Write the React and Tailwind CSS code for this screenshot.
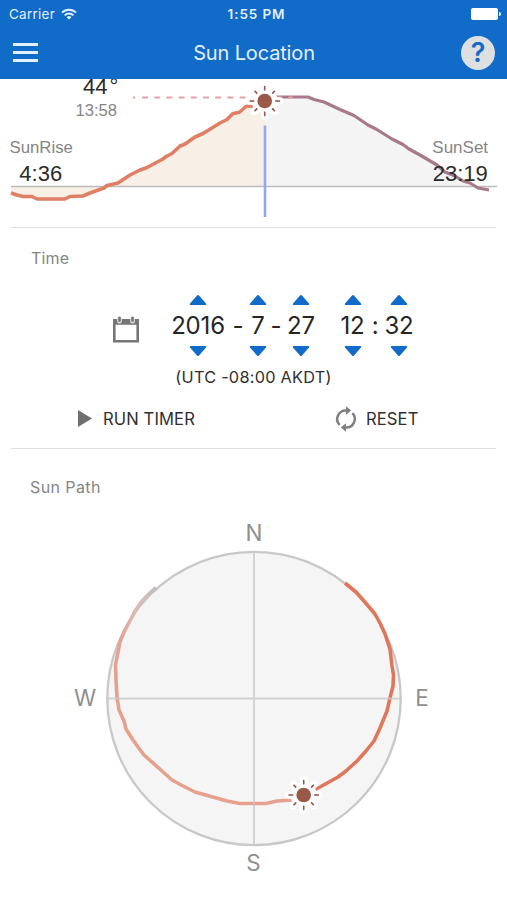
const sunRays = [0, 45, 90, 135, 180, 225, 270, 315];

function Sun({ x, y }) {
  return (
    <g transform={`translate(${x} ${y})`}>
      <circle r="13" fill="#fff" />
      {sunRays.map((a) => (
        <line key={a} x1="10" x2="15" y1="0" y2="0" transform={`rotate(${a})`} stroke="#fff" strokeWidth="7.5" strokeLinecap="round" />
      ))}
      {sunRays.map((a) => (
        <line key={a} x1="10.5" x2={a % 90 ? 14.3 : 15.2} y1="0" y2="0" transform={`rotate(${a})`} stroke="#9c5450" strokeWidth="1.6" />
      ))}
      <circle r="7.3" fill="#9b594a" />
    </g>
  );
}

function StatusBar() {
  return (
    <div className="flex h-7 items-center justify-between pl-[9px] pr-[6px] text-[#e3effb]">
      <div className="flex w-28 items-center gap-[6px]">
        <span className="text-[13.5px] tracking-[0.25px]">Carrier</span>
        <svg width="16" height="12" viewBox="0 0 16 12" fill="none" stroke="#e3effb" strokeWidth="2">
          <path d="M1 4.6a10 10 0 0 1 14 0" />
          <path d="M3.6 7.4a6.2 6.2 0 0 1 8.8 0" />
          <path d="M5.6 9.2a3.4 3.4 0 0 1 4.8 0L8 11.6z" fill="#e3effb" stroke="none" />
        </svg>
      </div>
      <span className="pl-[3px] text-[13.5px] font-semibold tracking-[0.9px]">1:55 PM</span>
      <div className="flex w-28 items-center justify-end gap-px">
        <div className="h-3 w-[27px] rounded-[2px] bg-white" />
        <div className="h-1 w-[2px] rounded-r-full bg-white" />
      </div>
    </div>
  );
}

function Header() {
  return (
    <header className="h-[79px] bg-[#116bc9] text-white">
      <StatusBar />
      <div className="flex h-[49px] items-center justify-between pl-[13px] pr-3">
        <div className="flex w-[34px] flex-col gap-[5px]">
          <div className="h-[3px] w-[25px] bg-[#e3effb]" />
          <div className="h-[3px] w-[25px] bg-[#e3effb]" />
          <div className="h-[3px] w-[25px] bg-[#e3effb]" />
        </div>
        <h1 className="text-[20px] tracking-[-0.15px] text-[#e3effb]">Sun Location</h1>
        <div className="flex size-[34px] items-center justify-center rounded-full bg-[#dedfe1] text-[27px] font-semibold leading-none text-[#116bc9]">?</div>
      </div>
    </header>
  );
}

const rise = '11,193 16,194.8 23,196.5 32,196.5 37,199 65,199 70,196.5 83,196 90,193 104,188 107,185.5 118,183 130,175 140,170 146,168 163,159 166,156.5 172,153.5 180,146 185,144 195,137 203,133.5 220,123 227,119.5 233,113.5 239,112.5 246,106.5 252,106 265,101';
const fall = '265,97 308,97 314,99.5 324,102 340,109.5 354,115.5 368,125 376,129 392,139 403,144.5 409,149 420,155 437,165 445,172 455,176 463,181 470,183 478,188 489,190';

function AltitudeChart() {
  return (
    <svg className="block h-[148px] w-full font-['Liberation_Sans',sans-serif]" viewBox="0 79 507 148">
      <polygon points={`11,186.5 ${rise} 265,186.5`} fill="#f8efe6" />
      <polygon points={`265,186.5 ${fall} 489,186.5`} fill="#f4f4f4" />
      <line x1="11" x2="497" y1="186.5" y2="186.5" stroke="#bcbcbc" strokeWidth="1.6" />
      <polyline points={rise} fill="none" stroke="#df7f65" strokeWidth="3.6" strokeLinejoin="round" />
      <polyline points={fall} fill="none" stroke="#a67a8a" strokeWidth="3.2" strokeLinejoin="round" />
      <line x1="133" x2="135" y1="97.5" y2="97.5" stroke="#e5a0a8" strokeWidth="2" />
      <line x1="142" x2="293" y1="97.5" y2="97.5" stroke="#e5a0a8" strokeWidth="2" strokeDasharray="6 6.2" />
      <Sun x={264.7} y={101} />
      <line x1="265" x2="265" y1="125.5" y2="217" stroke="#90a8f3" strokeWidth="2.6" />
      <g fill="#2b2b2b" fontSize="22">
        <text x="83" y="93.5">44<tspan dx="2">°</tspan></text>
        <text x="19.3" y="180.5">4:36</text>
        <text x="432.7" y="180.5">23:19</text>
      </g>
      <g fill="#858585" fontSize="16.6">
        <text x="75.5" y="116">13:58</text>
        <text x="9.5" y="152.5" fontSize="16.8">SunRise</text>
        <text x="432.3" y="152.5" fontSize="17">SunSet</text>
      </g>
    </svg>
  );
}

function Up() {
  return (
    <svg width="18" height="10" viewBox="0 0 18 10" className="shrink-0 fill-[#116bc9]">
      <path d="M8 .6Q9-.4 10 .6L17 8.6Q17.6 10 16.4 10H1.6Q.4 10 1 8.6z" />
    </svg>
  );
}

function Down() {
  return (
    <svg width="18" height="10" viewBox="0 0 18 10" className="shrink-0 fill-[#116bc9]">
      <path d="M8 9.4Q9 10.4 10 9.4L17 1.4Q17.6 0 16.4 0H1.6Q.4 0 1 1.4z" />
    </svg>
  );
}

function Spinner({ value, className }) {
  return (
    <div className={`flex flex-col items-center ${className}`}>
      <Up />
      <span className="h-[41px] leading-[42px]">{value}</span>
      <Down />
    </div>
  );
}

function TimeSection() {
  return (
    <section className="mx-[11px] h-[222px] border-y border-[#dedede]">
      <h2 className="pl-5 pt-[18px] text-[16px] leading-6 tracking-[0.2px] text-[#858585]">Time</h2>
      <div className="mt-[25px] flex items-center pl-[101px] text-[24px] tracking-[-0.2px] text-[#262626]">
        <svg width="28" height="28" viewBox="0 0 28 28" className="mr-[30px] mt-[7px]">
          <path d="M1 4h26v23.5H1zM3.6 9.8v15.1h20.8V9.8z" fill="#767676" fillRule="evenodd" />
          <path d="M5.1 2.5v3.7q0 2.2 2.4 2.2t2.4-2.2V2.5zM18.1 2.5v3.7q0 2.2 2.4 2.2t2.4-2.2V2.5z" fill="#e2e2e2" />
          <rect x="6.2" y="1.6" width="2.6" height="5.4" rx="1.3" fill="#767676" />
          <rect x="19.2" y="1.6" width="2.6" height="5.4" rx="1.3" fill="#767676" />
        </svg>
        <Spinner value="2016" className="w-14" />
        <span className="w-6 text-center">-</span>
        <Spinner value="7" className="w-4" />
        <span className="w-5 text-center">-</span>
        <Spinner value="27" className="mr-[22px] w-[30px]" />
        <Spinner value="12" className="w-[29px]" />
        <span className="w-4 text-center">:</span>
        <Spinner value="32" className="w-8" />
      </div>
      <p className="mt-[9px] text-center text-[16.3px] leading-6 tracking-[0.25px] text-[#2f2f2f]">(UTC -08:00 AKDT)</p>
      <div className="mt-4 flex h-7 items-center text-[16.6px] tracking-[0.1px] text-[#2f2f2f]">
        <div className="flex w-[257px] items-center pl-[67px]">
          <svg width="14" height="17" viewBox="0 0 14 17" className="mr-[11px] fill-[#707070]">
            <path d="M0 0l14 8.5L0 17z" />
          </svg>
          RUN TIMER
        </div>
        <div className="flex items-center pl-[64px]">
          <svg width="28" height="28" viewBox="0 0 28 28" className="mr-[6px]">
            <path d="M14.5 5.5A8.6 8.6 0 0 0 7.6 20M13.5 22.5A8.6 8.6 0 0 0 20.4 8" fill="none" stroke="#808080" strokeWidth="2.5" />
            <path d="M14 1.2l5.2 4.3L14 9.8zM14 26.8l-5.2-4.3L14 18.2z" fill="#808080" />
          </svg>
          RESET
        </div>
      </div>
    </section>
  );
}

const ahead = '345,583 356,592 364,601 375,614 380,623 385,634 390,649 392,666 393.5,675 393,686 390,698 387,711 380,728 374,741 366,751 357,761 346,771 338,777 320,787 304,795';
const passed = '304,798 292,800 277,801 266,803.5 240,803.5 227,801 195,792 182,785.5 172,780 162,771 144,755 138,747 133,740 126,729 124,721 119,710 117,697 116,680 115.5,665 120,642 124,632 132,617 135,611 142,601 150,593 156,587.5';

function SunPath() {
  return (
    <section>
      <h2 className="pl-[30px] pt-[26px] text-[16px] leading-6 tracking-[0.4px] text-[#858585]">Sun Path</h2>
      <svg className="block h-[401px] w-full" viewBox="0 499 507 401">
        <defs>
          <linearGradient id="passed" gradientUnits="userSpaceOnUse" x1="0" x2="0" y1="588" y2="680">
            <stop offset="0" stopColor="#c2bcbd" />
            <stop offset="0.2" stopColor="#dbbcb8" />
            <stop offset="0.55" stopColor="#e3a595" />
            <stop offset="1" stopColor="#e6a08e" />
          </linearGradient>
        </defs>
        <circle cx="254" cy="698.5" r="146.7" fill="#f5f5f5" stroke="#c8c8c8" strokeWidth="2.3" />
        <polyline points={passed} fill="none" stroke="url(#passed)" strokeWidth="3.6" strokeLinejoin="round" />
        <polyline points={ahead} fill="none" stroke="#df775b" strokeWidth="3.6" strokeLinejoin="round" />
        <path d="M254 552v293M107 698.5h294" stroke="#c8c8c8" strokeOpacity="0.8" strokeWidth="1.8" />
        <Sun x={303.7} y={795} />
        <g fill="#8f8f8f" fontSize="22.5" textAnchor="middle">
          <text x="254" y="541">N</text>
          <text x="85" y="706">W</text>
          <text x="422" y="706">E</text>
          <text x="253.5" y="870.5">S</text>
        </g>
      </svg>
    </section>
  );
}

export default function App() {
  return (
    <div className="h-[900px] w-[507px] overflow-hidden bg-white font-['Inter',sans-serif]">
      <Header />
      <AltitudeChart />
      <TimeSection />
      <SunPath />
    </div>
  );
}
